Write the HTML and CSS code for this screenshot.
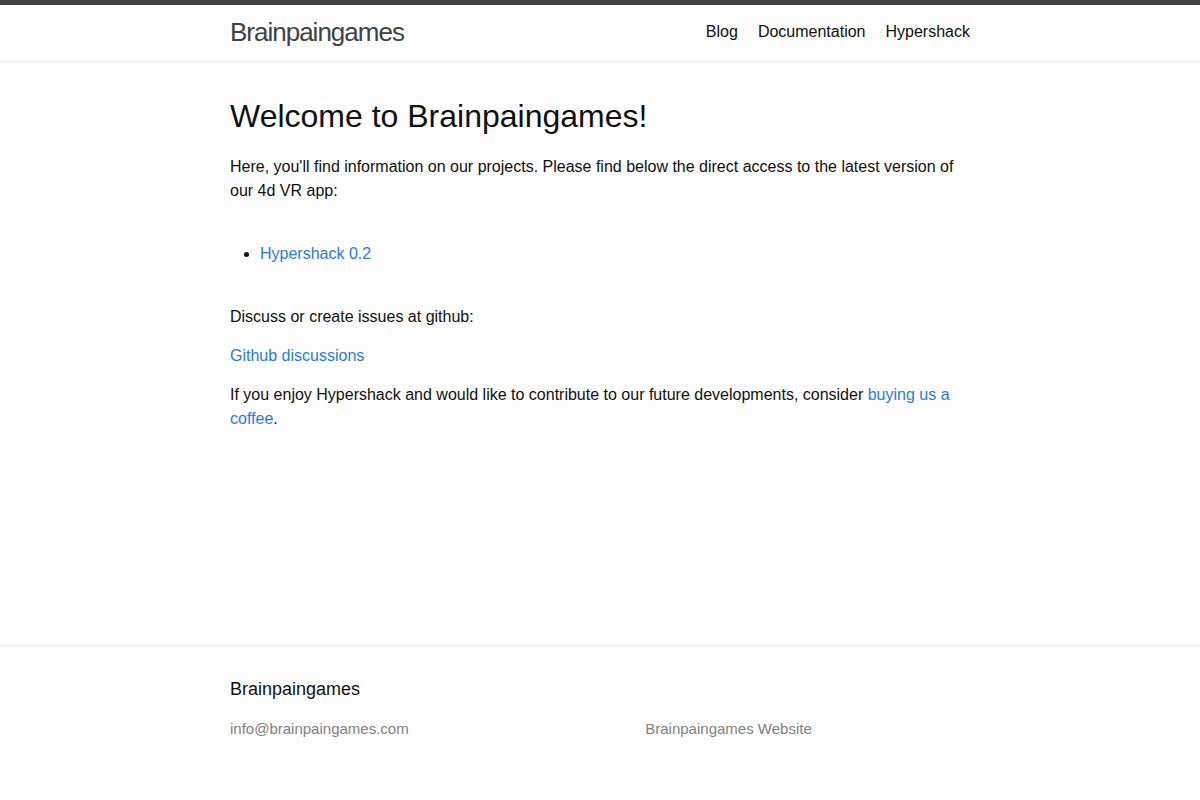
FILE: index.html
```html
<!DOCTYPE html>
<html lang="en">
<head>
<meta charset="utf-8">
<title>Brainpaingames</title>
<link rel="stylesheet" href="styles.css">
</head>
<body>
<header class="site-header">
  <div class="wrapper header-row">
    <a class="site-title" href="#">Brainpaingames</a>
    <nav class="site-nav">
      <a class="page-link" href="#">Blog</a>
      <a class="page-link" href="#">Documentation</a>
      <a class="page-link" href="#">Hypershack</a>
    </nav>
  </div>
</header>
<main class="page-content">
  <div class="wrapper">
    <h1 class="page-heading">Welcome to Brainpaingames!</h1>
    <p>Here, you'll find information on our projects. Please find below the direct access to the latest version of our 4d VR app:</p>
    <ul class="release-list">
      <li><a href="#">Hypershack 0.2</a></li>
    </ul>
    <p>Discuss or create issues at github:</p>
    <p><a href="#">Github discussions</a></p>
    <p>If you enjoy Hypershack and would like to contribute to our future developments, consider <a href="#">buying us a coffee</a>.</p>
  </div>
</main>
<footer class="site-footer">
  <div class="wrapper">
    <h2 class="footer-heading">Brainpaingames</h2>
    <div class="footer-col-wrapper">
      <div class="footer-col footer-col-1">
        <ul class="contact-list">
          <li><a class="u-email" href="#">info@brainpaingames.com</a></li>
        </ul>
      </div>
      <div class="footer-col footer-col-2"></div>
      <div class="footer-col footer-col-3">
        <p>Brainpaingames Website</p>
      </div>
    </div>
  </div>
</footer>
</body>
</html>
```

FILE: styles.css
```css
* { box-sizing: border-box; }
html, body { margin: 0; padding: 0; }
body {
  font-family: "Liberation Sans", Arial, Helvetica, sans-serif;
  font-size: 16px;
  line-height: 1.5;
  font-weight: 400;
  color: #111111;
  background-color: #fdfdfd;
  min-height: 100vh;
  display: flex;
  flex-direction: column;
}
h1, h2, p, ul { margin: 0 0 15px 0; padding: 0; }
a { color: #2a7ae2; text-decoration: none; }

.wrapper {
  max-width: 800px;
  margin: 0 auto;
  padding: 0 30px;
  width: 100%;
}

.site-header {
  border-top: 5px solid #424242;
  border-bottom: 1px solid #e8e8e8;
  min-height: 61.95px;
}
.header-row {
  display: flex;
  justify-content: space-between;
  align-items: flex-start;
}
.site-title {
  font-size: 26px;
  font-weight: 300;
  line-height: 54px;
  letter-spacing: -1px;
  color: #424242;
}
.site-nav {
  line-height: 54px;
  display: flex;
  gap: 20px;
}
.page-link { color: #111111; }

.page-content {
  padding: 30px 0;
  flex: 1;
}
.page-heading {
  font-size: 32px;
  font-weight: 400;
  line-height: 48px;
}
.release-list {
  margin-left: 30px;
  padding: 24px 0 24px;
}

.site-footer {
  border-top: 1px solid #e8e8e8;
  padding: 30px 0;
}
.footer-heading {
  font-size: 18px;
  font-weight: 400;
  line-height: 27px;
  margin-bottom: 15px;
}
.footer-col-wrapper {
  display: flex;
  font-size: 15px;
  line-height: 22.5px;
  color: #828282;
  margin-left: -15px;
}
.footer-col { padding-left: 15px; margin-bottom: 15px; }
.footer-col-1 { width: 35%; }
.footer-col-2 { width: 20%; }
.footer-col-3 { width: 45%; }
.contact-list { list-style: none; margin: 0 0 15px 0; }
.contact-list a { color: #828282; }
.footer-col-3 p { margin: 0; }
```
